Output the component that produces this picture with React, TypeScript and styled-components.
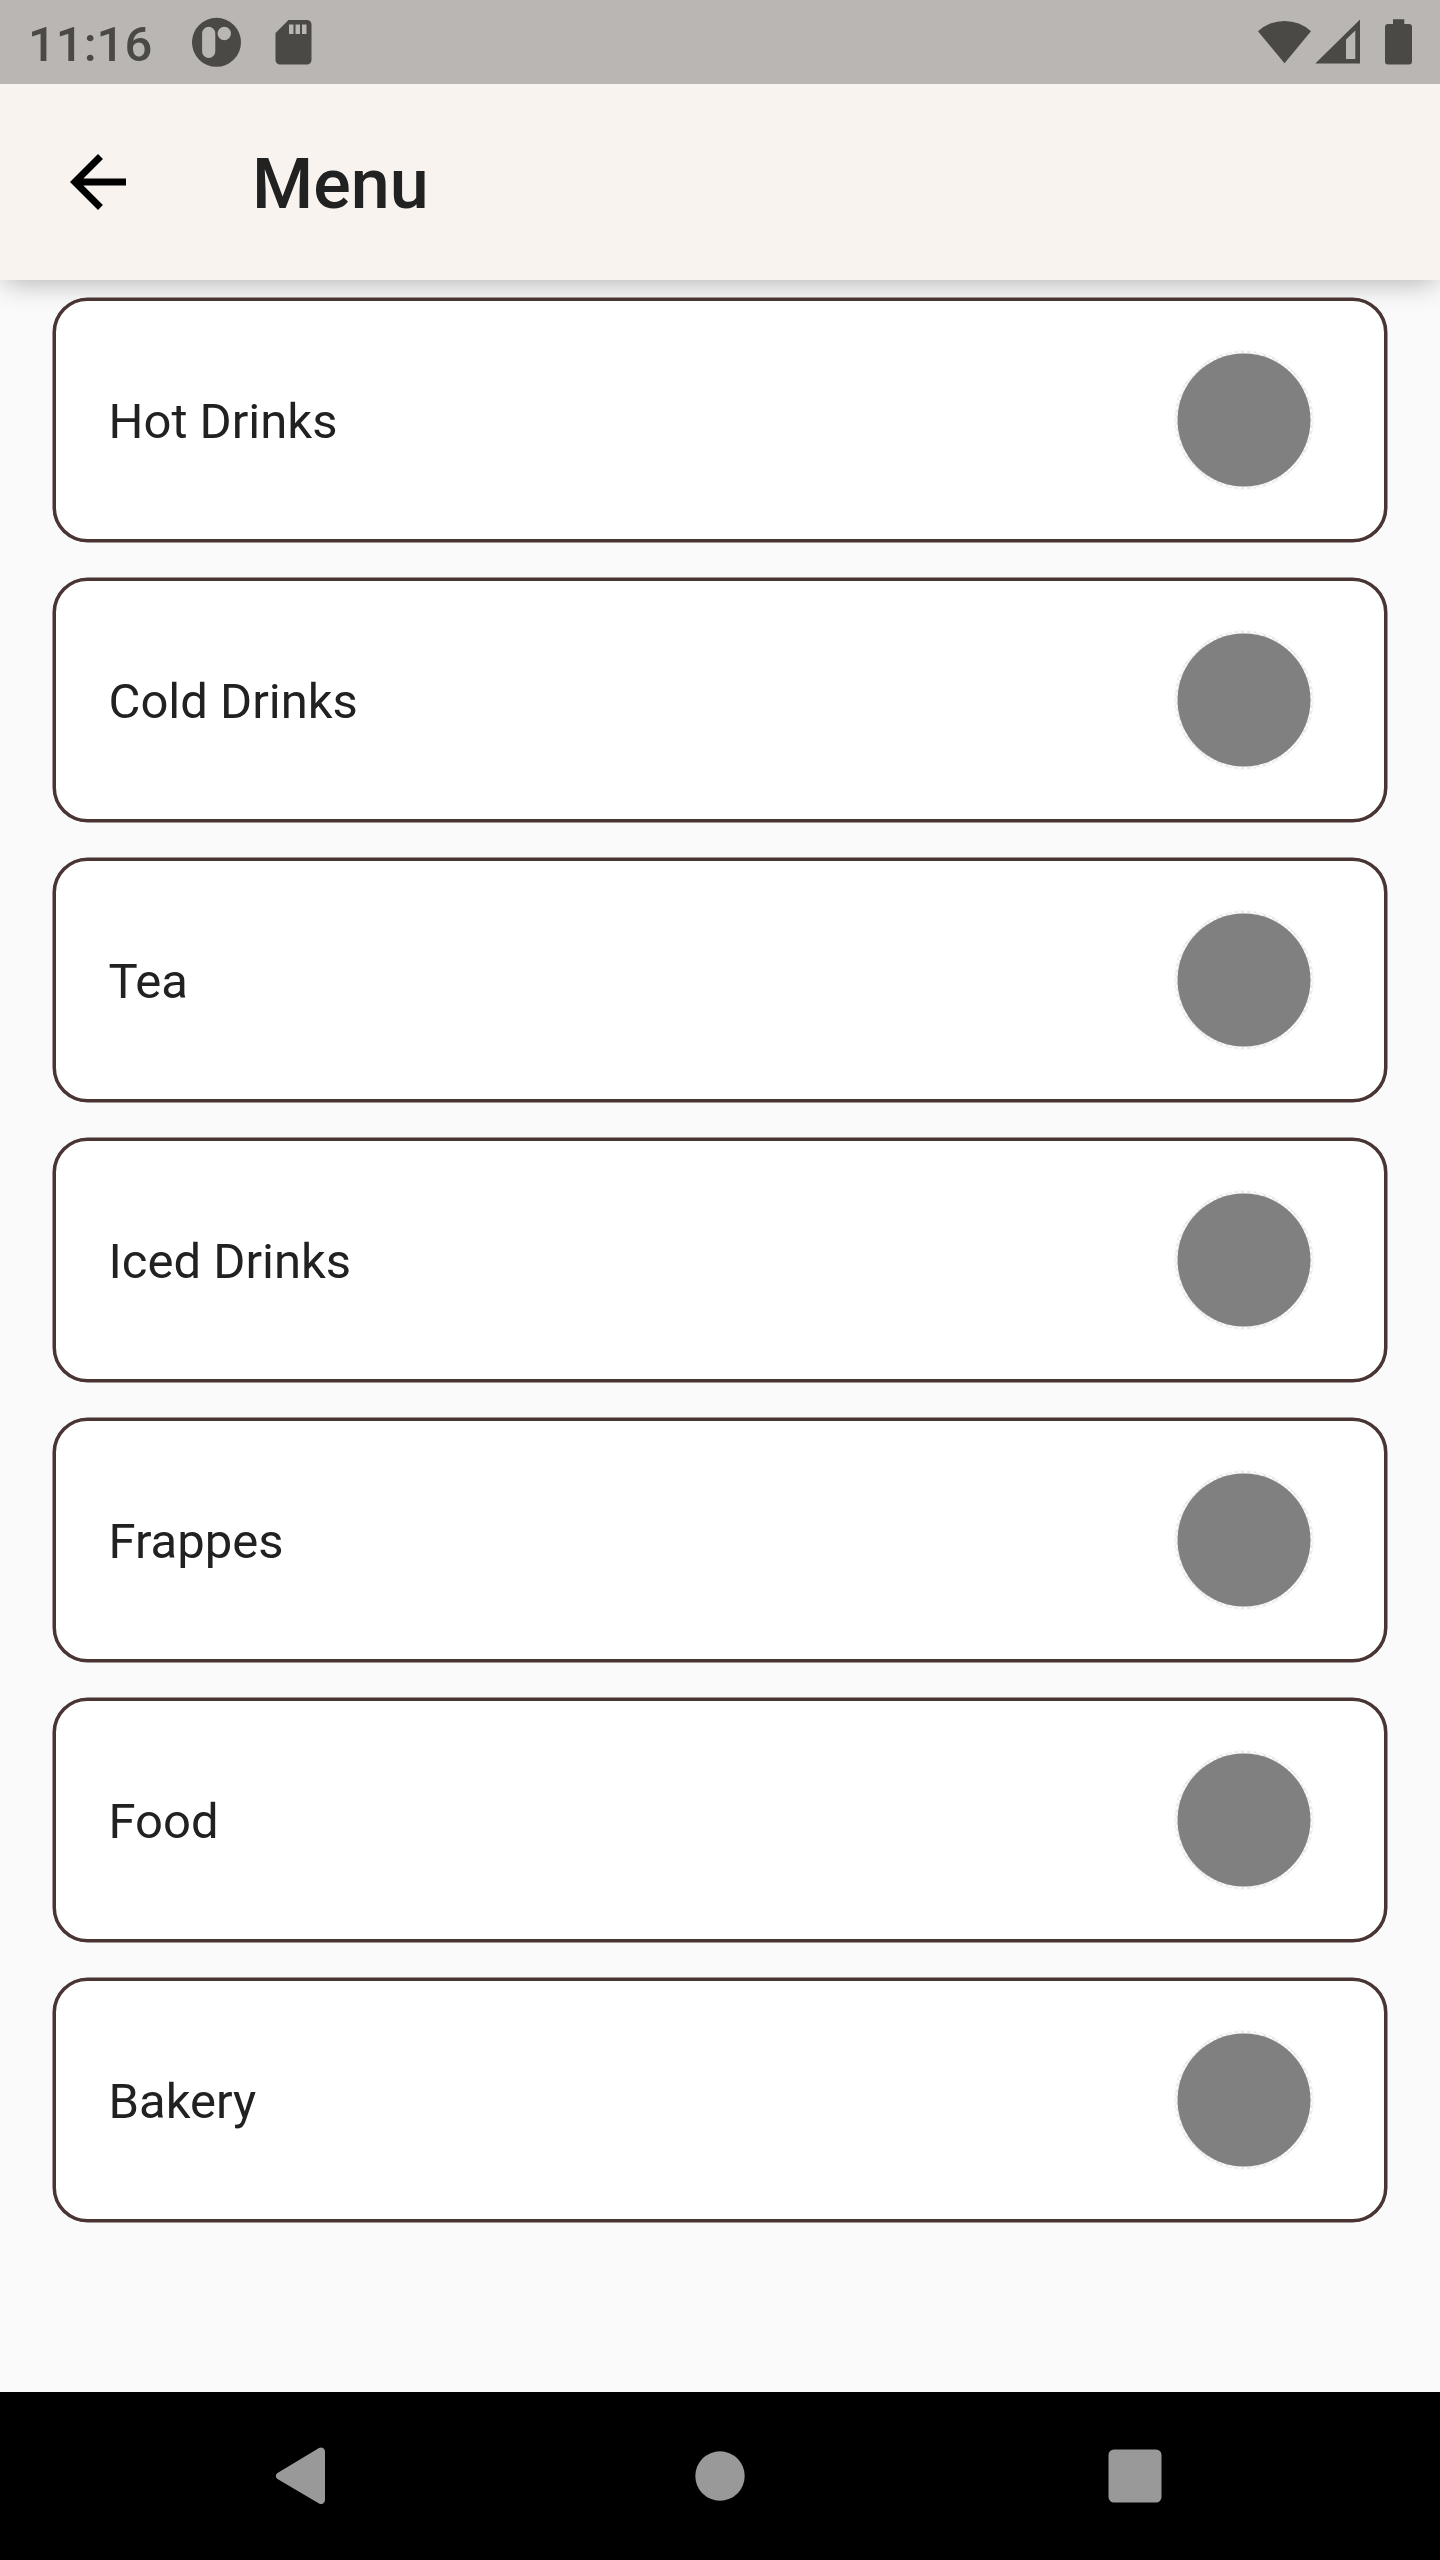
import React from "react";
import styled, { createGlobalStyle } from "styled-components";

const Global = createGlobalStyle`
  * { box-sizing: border-box; }
  body { margin: 0; background: #fafafa; font-family: Roboto, "Noto Sans", sans-serif; }
`;

const Screen = styled.div`
  display: flex;
  flex-direction: column;
  width: 1440px;
  height: 2560px;
  background: #fafafa;
  overflow: hidden;
`;

const StatusBar = styled.header`
  position: relative;
  z-index: 1;
  display: flex;
  justify-content: space-between;
  height: 84px;
  flex: none;
  background: #bab6b3;
  color: #4a4945;
`;

const StatusGroup = styled.div`
  display: flex;
  align-items: flex-start;
`;

const Clock = styled.span`
  margin-left: 28px;
  width: 164px;
  padding-top: 16px;
  font-size: 49px;
  line-height: 57px;
  font-weight: 500;
`;

const Glyph = styled.svg`
  display: block;
  flex: none;
`;

const AppBar = styled.nav`
  display: flex;
  align-items: center;
  flex: none;
  height: 196px;
  padding-left: 56px;
  background: #f8f3ef;
  box-shadow: 0 6px 27px -4px rgba(0, 0, 0, 0.3);
`;

const BackButton = styled.button`
  display: flex;
  width: 84px;
  height: 84px;
  padding: 0;
  border: 0;
  background: none;
`;

const Title = styled.h1`
  margin: 3px 0 0 112px;
  font-size: 70px;
  line-height: 82px;
  font-weight: 500;
  color: #212121;
`;

const List = styled.main`
  display: flex;
  flex-direction: column;
  gap: 36px;
  flex: 1;
  padding: 18px 53px 0;
`;

const Card = styled.section`
  display: flex;
  align-items: center;
  justify-content: space-between;
  height: 244px;
  flex: none;
  padding: 0 70px 0 52.5px;
  border: 3px solid #4a3535;
  border-radius: 34.5px;
  background: #fff;
  box-shadow: 0 0 0 0.5px #4a3535;
`;

const Label = styled.span`
  padding-top: 2px;
  font-size: 49px;
  line-height: 57px;
  color: #212121;
`;

const NavBar = styled.footer`
  display: flex;
  flex: none;
  height: 168px;
  background: #000;
`;

const categories = ["Hot Drinks", "Cold Drinks", "Tea", "Iced Drinks", "Frappes", "Food", "Bakery"];

const Thumb = () => (
  <Glyph width="140" height="140" viewBox="0 0 140 140">
    <defs>
      <pattern id="checker" width="6.2" height="6.2" x="67" y="0.4" patternUnits="userSpaceOnUse">
        <rect width="3.1" height="3.1" fill="#e9e9ea" />
        <rect x="3.1" y="3.1" width="3.1" height="3.1" fill="#e9e9ea" />
      </pattern>
    </defs>
    <circle cx="70" cy="70" r="69.7" fill="url(#checker)" stroke="#f3f8fc" strokeWidth="0.5" />
    <circle cx="70" cy="70" r="66.5" fill="#808080" />
  </Glyph>
);

export default function App() {
  return (
    <>
      <Global />
      <Screen>
        <StatusBar>
          <StatusGroup>
            <Clock>11:16</Clock>
            <Glyph width="130" height="84" viewBox="192 0 130 84">
              <path
                fill="#4a4945"
                fillRule="evenodd"
                d="M216.5 17.800a24.500 24.500 0 1 0 0 49a24.500 24.500 0 1 0 0-49ZM208.700 26.800a6.600 6.600 0 0 1 6.600 6.600v18a6.600 6.600 0 0 1-13.200 0v-18a6.600 6.600 0 0 1 6.600-6.600ZM224.300 26.800a6.700 6.700 0 1 1 0 13.400a6.700 6.700 0 1 1 0-13.400Z"
              />
              <path
                fill="#4a4945"
                fillRule="evenodd"
                d="M288.500 20H307a4.500 4.500 0 0 1 4.500 4.500V60a4.500 4.500 0 0 1-4.500 4.500H280a4.500 4.500 0 0 1-4.500-4.500V33ZM289 24.500V34h4.500V24.500ZM295.500 24.500V34h4.500V24.500ZM302 24.500V34h4.500V24.500Z"
              />
            </Glyph>
          </StatusGroup>
          <Glyph width="190" height="84" viewBox="1250 0 190 84">
            <path fill="#4a4945" d="M1258 31.300A39 39 0 0 1 1311 31.300L1284.500 63.300Z" />
            <path fill="#4a4945" fillRule="evenodd" d="M1360 19.500V63.500H1315.300ZM1355.300 30.500L1346 39.500V59H1355.300Z" />
            <path
              fill="#4a4945"
              d="M1393 19.300h11.300V24h4.700a3 3 0 0 1 3 3v34.500a3 3 0 0 1-3 3h-21a3 3 0 0 1-3-3V27a3 3 0 0 1 3-3h5Z"
            />
          </Glyph>
        </StatusBar>
        <AppBar>
          <BackButton aria-label="Back">
            <Glyph width="84" height="84" viewBox="0 0 24 24">
              <path d="M20 11H7.830l5.590-5.590L12 4l-8 8 8 8 1.410-1.410L7.830 13H20v-2z" />
            </Glyph>
          </BackButton>
          <Title>Menu</Title>
        </AppBar>
        <List>
          {categories.map((name) => (
            <Card key={name}>
              <Label>{name}</Label>
              <Thumb />
            </Card>
          ))}
        </List>
        <NavBar>
          <Glyph width="1440" height="168" viewBox="0 2392 1440 168" fill="#999">
            <path d="M319 2448a4 4 0 0 1 6 3.500V2500a4 4 0 0 1-6 3.500L277.500 2479a3.500 3.500 0 0 1 0-6Z" />
            <circle cx="720" cy="2476" r="24.700" />
            <rect x="1108.500" y="2449.500" width="53" height="53" rx="5.500" />
          </Glyph>
        </NavBar>
      </Screen>
    </>
  );
}
